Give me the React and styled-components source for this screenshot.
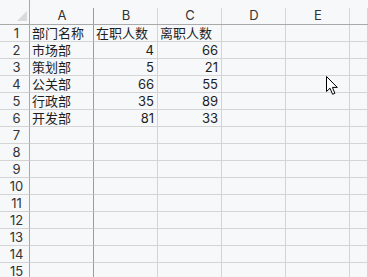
import React from "react";
import styled, { createGlobalStyle } from "styled-components";

const Global = createGlobalStyle`
  html, body { margin: 0; padding: 0; background: #f7f8fa; overflow: hidden; }
  body { font-family: Inter, "Noto Sans CJK SC", sans-serif; }
`;

const Sheet = styled.div`
  position: relative;
  width: 368px;
  height: 277px;
  overflow: hidden;
  background: #f7f8fa;
  display: grid;
  grid-template-columns: 30px repeat(5, 64px) 1fr;
  grid-template-rows: 25px repeat(15, 17px);
  font-family: Inter, "Noto Sans CJK SC", sans-serif;
  font-size: 13px;
  color: #1e1e1e;
`;

const Corner = styled.div`
  position: relative;
  border-bottom: 1px solid #a9a9a9;
  border-right: 1px solid #a9a9a9;
  svg { position: absolute; left: 17px; top: 11px; }
`;

const ColHead = styled.div`
  position: relative;
  border-bottom: 1px solid #a9a9a9;
  display: flex;
  align-items: center;
  justify-content: center;
  padding-top: 7px;
  box-sizing: border-box;
  color: #333;
  line-height: 1;
  &::after {
    content: "";
    position: absolute;
    right: 0;
    top: 8px;
    bottom: 0;
    width: 1px;
    background: ${(p) => (p.$dark ? "#9c9c9c" : "#d6d6d6")};
  }
`;

const RowHead = styled.div`
  border-right: 1px solid #a9a9a9;
  border-bottom: 1px solid #d4d4d4;
  display: flex;
  align-items: center;
  justify-content: center;
  padding-left: 4px;
  box-sizing: border-box;
  color: #333;
  line-height: 1;
`;

const Cell = styled.div`
  border-right: 1px solid ${(p) => (p.$dark ? "#9c9c9c" : "#d4d4d4")};
  border-bottom: 1px solid #d4d4d4;
  display: flex;
  align-items: center;
  justify-content: ${(p) => (p.$num ? "flex-end" : "flex-start")};
  padding: 0 3px 0 2px;
  box-sizing: border-box;
  white-space: nowrap;
  line-height: 1;
`;

const Cursor = styled.svg`
  position: absolute;
  left: 326px;
  top: 76px;
`;

const cols = ["A", "B", "C", "D", "E", ""];
const data = [
  ["部门名称", "在职人数", "离职人数"],
  ["市场部", 4, 66],
  ["策划部", 5, 21],
  ["公关部", 66, 55],
  ["行政部", 35, 89],
  ["开发部", 81, 33],
];

export default function App() {
  const rows = [];
  for (let r = 0; r < 15; r++) {
    const d = data[r] || [];
    rows.push(<RowHead key={`h${r}`}>{r + 1}</RowHead>);
    for (let c = 0; c < 6; c++) {
      const v = d[c];
      const num = typeof v === "number";
      rows.push(
        <Cell key={`${r}-${c}`} $num={num} $dark={c === 0}>
          {v}
        </Cell>
      );
    }
  }
  return (
    <>
      <Global />
      <Sheet>
        <Corner>
          <svg width="11" height="11" viewBox="0 0 11 11">
            <polygon points="10,0 10,10 0,10" fill="#dadada" />
          </svg>
        </Corner>
        {cols.map((c, i) => (
          <ColHead key={i} $dark={i === 0}>
            {c}
          </ColHead>
        ))}
        {rows}
        <Cursor width="13" height="20" viewBox="0 0 13 20">
          <path
            d="M0.5 0.5 L0.5 15.5 L4 12.2 L6.6 18.3 L8.9 17.3 L6.4 11.4 L11.3 11.4 Z"
            fill="#fff"
            stroke="#000"
            strokeWidth="1"
            strokeLinejoin="miter"
          />
        </Cursor>
      </Sheet>
    </>
  );
}
